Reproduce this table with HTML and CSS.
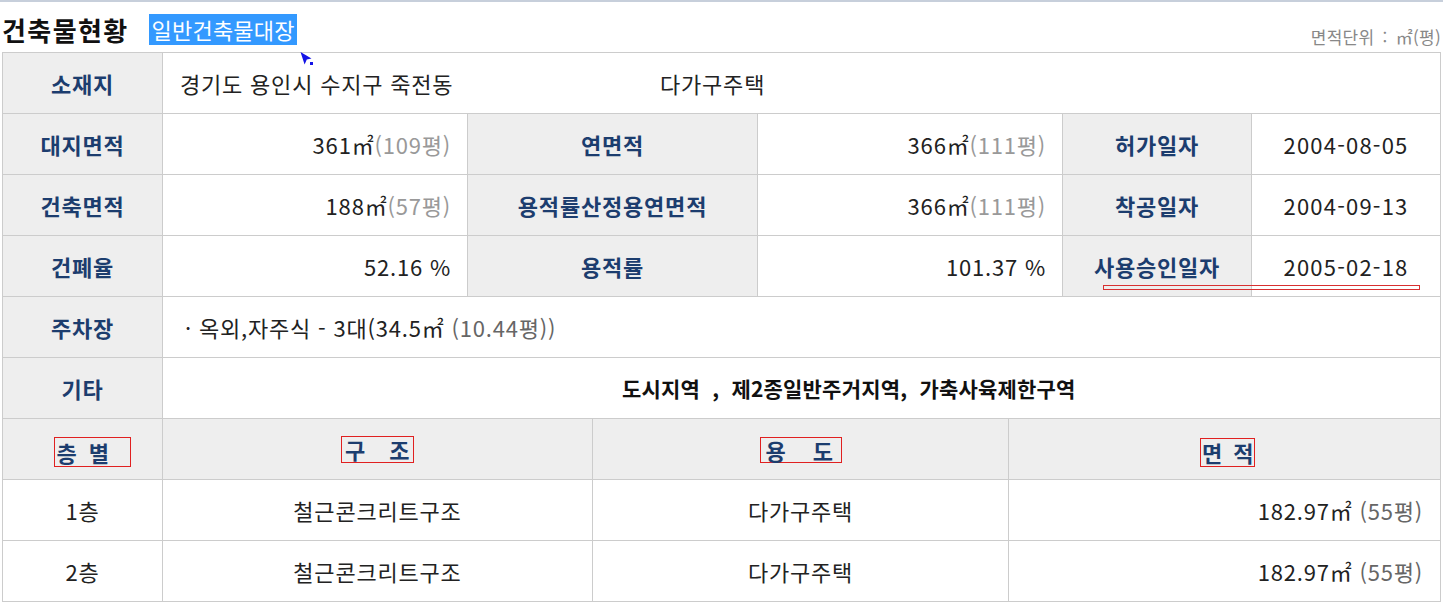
FILE: index.html
```html
<!DOCTYPE html>
<html lang="ko">
<head>
<meta charset="utf-8">
<title>건축물현황</title>
<link rel="stylesheet" href="styles.css">
</head>
<body>
<div class="page">
  <div class="topbar"></div>
  <header class="head">
    <h1 class="title">건축물현황<span class="sel">일반건축물대장</span></h1>
    <span class="unit">면적단위 : ㎡(평)</span>
  </header>
  <table class="info">
    <colgroup>
      <col class="c1"><col class="c2"><col class="c3"><col class="c4"><col class="c5"><col class="c6">
    </colgroup>
    <tr>
      <th>소재지</th>
      <td colspan="5" class="addr"><span class="loc">경기도 용인시 수지구 죽전동</span><span class="kind">다가구주택</span></td>
    </tr>
    <tr>
      <th>대지면적</th>
      <td class="num">361㎡<span class="py">(109평)</span></td>
      <th>연면적</th>
      <td class="num">366㎡<span class="py">(111평)</span></td>
      <th>허가일자</th>
      <td class="date">2004-08-05</td>
    </tr>
    <tr>
      <th>건축면적</th>
      <td class="num">188㎡<span class="py">(57평)</span></td>
      <th>용적률산정용연면적</th>
      <td class="num">366㎡<span class="py">(111평)</span></td>
      <th>착공일자</th>
      <td class="date">2004-09-13</td>
    </tr>
    <tr>
      <th>건폐율</th>
      <td class="num">52.16 %</td>
      <th>용적률</th>
      <td class="num">101.37 %</td>
      <th>사용승인일자</th>
      <td class="date">2005-02-18</td>
    </tr>
    <tr>
      <th>주차장</th>
      <td colspan="5" class="addr park">· 옥외,자주식 - 3대(34.5㎡ <span class="py2">(10.44평))</span></td>
    </tr>
    <tr>
      <th>기타</th>
      <td colspan="5" class="etc">도시지역&nbsp; ,&nbsp; 제2종일반주거지역,&nbsp; 가축사육제한구역</td>
    </tr>
  </table>
  <table class="floors">
    <colgroup>
      <col class="f1"><col class="f2"><col class="f3"><col class="f4">
    </colgroup>
    <tr class="fhead">
      <th><span class="box b1"><span>층</span><span>별</span></span></th>
      <th><span class="box b2"><span>구</span><span>조</span></span></th>
      <th><span class="box b3"><span>용</span><span>도</span></span></th>
      <th><span class="box b4"><span>면</span><span>적</span></span></th>
    </tr>
    <tr>
      <td>1층</td>
      <td>철근콘크리트구조</td>
      <td>다가구주택</td>
      <td class="area">182.97㎡ <span class="py2">(55평)</span></td>
    </tr>
    <tr>
      <td>2층</td>
      <td>철근콘크리트구조</td>
      <td>다가구주택</td>
      <td class="area">182.97㎡ <span class="py2">(55평)</span></td>
    </tr>
  </table>
  <div class="mark"></div>
  <svg class="cursor" width="15" height="15" viewBox="0 0 15 15" aria-hidden="true">
    <path d="M0.5 0 L11.5 6.5 L6.8 7.6 L4.6 12.5 Z" fill="#1414e6"/>
    <rect x="10" y="10" width="3" height="3" fill="#1414e6"/>
  </svg>
</div>
</body>
</html>
```

FILE: styles.css
```css
html, body {
  margin: 0;
  padding: 0;
  background: #fff;
}
body {
  font-family: "Noto Sans CJK KR", "Noto Sans", sans-serif;
  color: #222;
}
.page {
  position: relative;
  width: 1443px;
}
.topbar {
  height: 2px;
  background: #c7cfdb;
}
.head {
  height: 50px;
  display: flex;
  justify-content: space-between;
  align-items: flex-end;
  padding: 0 2px 0 2px;
  box-sizing: border-box;
}
.title {
  margin: 0 0 6px 0;
  font-size: 26px;
  font-weight: bold;
  color: #111;
  line-height: 33px;
  letter-spacing: 1.4px;
  display: flex;
  align-items: center;
}
.sel {
  display: inline-block;
  margin-left: 20px;
  background: #3399ff;
  color: #fff;
  font-weight: normal;
  font-size: 22px;
  line-height: 31px;
  letter-spacing: 0.2px;
  padding: 0 2px 0 3px;
}
.unit {
  font-size: 17px;
  color: #888;
  margin-bottom: 3px;
  line-height: 24px;
  word-spacing: 3px;
  letter-spacing: 0.3px;
}
table {
  border-collapse: collapse;
  table-layout: fixed;
  width: 1439px;
  margin-left: 2px;
}
th, td {
  border: 1px solid #cccccc;
  height: 61px;
  padding: 0;
  font-size: 22px;
  letter-spacing: 0.8px;
  vertical-align: middle;
  box-sizing: border-box;
}
th {
  background: #eeeeee;
  color: #1c3d6e;
  font-weight: bold;
  text-align: center;
}
td {
  background: #fff;
  color: #222;
}
.c1 { width: 160px; }
.c2 { width: 305px; }
.c3 { width: 290px; }
.c4 { width: 305px; }
.c5 { width: 189px; }
.c6 { width: 189px; }
.addr {
  padding-left: 17px;
}
.loc {
  display: inline-block;
  width: 480px;
}
.park {
  padding-left: 22px;
}
.num {
  text-align: right;
  padding-right: 16px;
}
.date {
  text-align: center;
  letter-spacing: 1.2px;
}
.py {
  color: #999;
}
.py2 {
  color: #666;
}
.etc {
  text-align: left;
  padding-left: 459px;
  font-size: 21px;
  letter-spacing: 0.2px;
  font-weight: bold;
  color: #111;
}
.floors th, .floors td {
  text-align: center;
}
.floors .fhead th {
  border-top: none;
  height: 60px;
}
.f1 { width: 160px; }
.f2 { width: 430px; }
.f3 { width: 416px; }
.f4 { width: 432px; }
.floors td.area {
  text-align: right;
  padding-right: 17px;
}
.box {
  display: inline-flex;
  align-items: center;
  vertical-align: middle;
  border: 1px solid #e02020;
  box-sizing: border-box;
  letter-spacing: 0;
  line-height: 24px;
}
.b1 { width: 77px; height: 30px; padding-left: 2px; gap: 12px; margin: 3px 0 0 19px; }
.b2 { width: 73px; height: 27px; padding-left: 3px; gap: 24px; margin: 0 0 4px 0; }
.b3 { width: 82px; height: 26px; padding-left: 5px; gap: 27px; margin: 0 0 3px 0; }
.b4 { width: 55px; height: 29px; padding-left: 1px; gap: 11px; margin: 2px 0 0 6px; }
.mark {
  position: absolute;
  left: 1103px;
  top: 285px;
  width: 317px;
  height: 5px;
  border: 1px solid #d83030;
  box-sizing: border-box;
}
.cursor {
  position: absolute;
  left: 300px;
  top: 52px;
}
```
